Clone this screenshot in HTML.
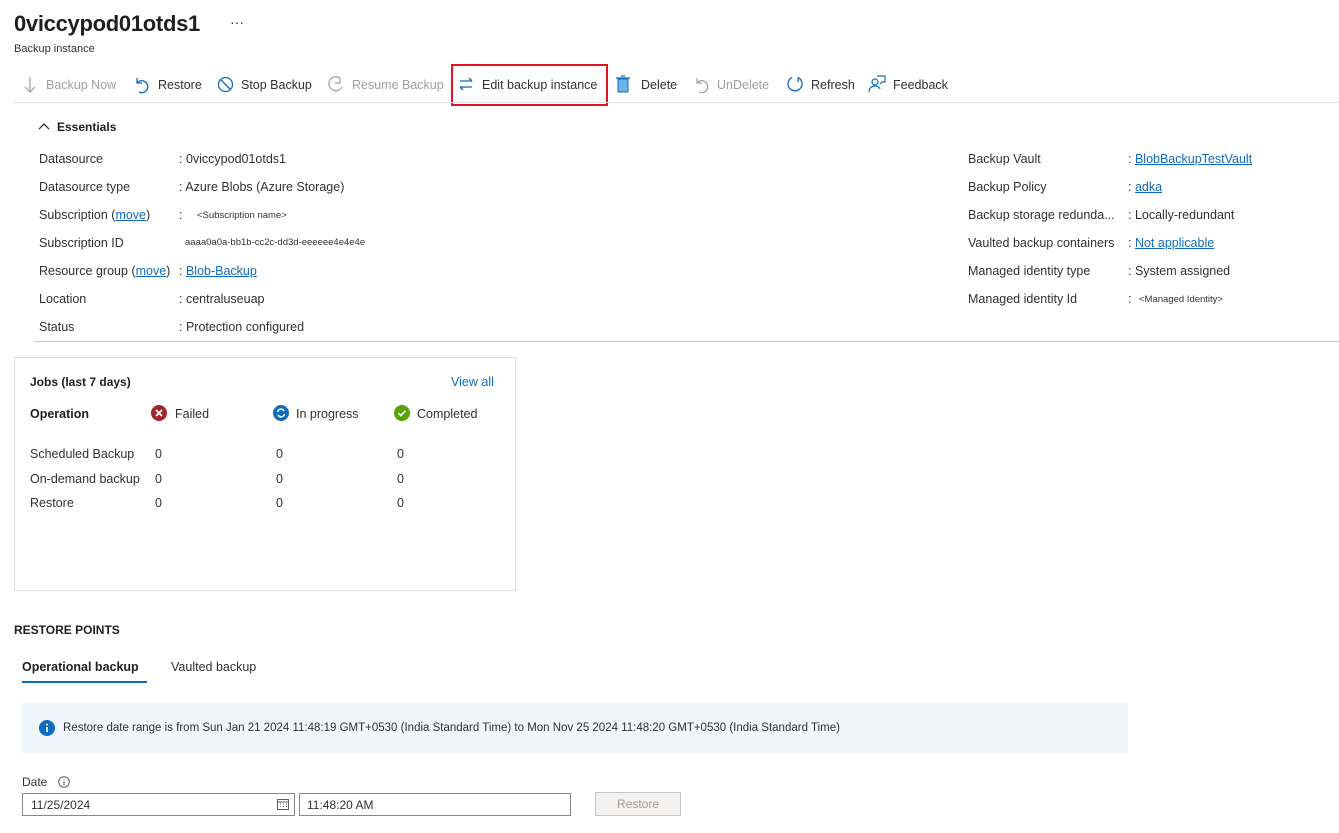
<!DOCTYPE html>
<html><head><style>
*{margin:0;padding:0;box-sizing:border-box}
body{width:1339px;height:833px;background:#fff;font-family:"Liberation Sans",sans-serif;font-size:12.5px;color:#323130;position:relative;overflow:hidden}
.a{position:absolute;white-space:nowrap}
.lnk{color:#0f6cbd;text-decoration:underline}
.g{color:#a19f9d}
.tb svg{position:absolute}
.s{font-size:9.5px}
</style></head><body>
<div class="a" style="left:14px;top:11px;font-size:22px;font-weight:600;color:#201f1e;letter-spacing:-0.3px">0viccypod01otds1</div>
<div class="a" style="left:230px;top:14px;font-size:14px">···</div>
<div class="a" style="left:14px;top:43px;font-size:11px">Backup instance</div>

<div class="tb">
<svg style="left:22px;top:76px" width="16" height="18" viewBox="0 0 16 18"><path d="M8 1v15M3 11l5 5 5-5" stroke="#a19f9d" fill="none" stroke-width="1.2"/></svg>
<div class="a g" style="left:46px;top:78px">Backup Now</div>
<svg style="left:134px;top:76px" width="16" height="18" viewBox="0 0 16 18"><path d="M3 2v5h5M3 7a6 6 0 1 1 2 9" stroke="#0f6cbd" fill="none" stroke-width="1.3"/></svg>
<div class="a" style="left:158px;top:78px">Restore</div>
<svg style="left:217px;top:76px" width="17" height="17" viewBox="0 0 17 17"><circle cx="8.5" cy="8.5" r="7" stroke="#0f6cbd" fill="none" stroke-width="1.3"/><path d="M4 4l9 9" stroke="#0f6cbd" stroke-width="1.3"/></svg>
<div class="a" style="left:241px;top:78px">Stop Backup</div>
<svg style="left:328px;top:76px" width="16" height="18" viewBox="0 0 16 18"><path d="M12 2a7 7 0 1 0 2 9M12 2v5H7" stroke="#a19f9d" fill="none" stroke-width="1.2"/></svg>
<div class="a g" style="left:352px;top:78px">Resume Backup</div>
<div class="a" style="left:451px;top:64px;width:157px;height:42px;border:2px solid #e81123"></div>
<svg style="left:458px;top:76px" width="16" height="16" viewBox="0 0 16 16"><path d="M2 5h12M11 2l3 3M14 11H2M5 14l-3-3" stroke="#0f6cbd" fill="none" stroke-width="1.3"/></svg>
<div class="a" style="left:482px;top:78px">Edit backup instance</div>
<svg style="left:616px;top:75px" width="14" height="18" viewBox="0 0 14 18"><rect x="2" y="4" width="10" height="13" fill="#6cb4e8" stroke="#0f6cbd"/><path d="M0 3h14M5 1h4" stroke="#0f6cbd" stroke-width="1.3"/></svg>
<div class="a" style="left:641px;top:78px">Delete</div>
<svg style="left:694px;top:76px" width="16" height="18" viewBox="0 0 16 18"><path d="M3 2v5h5M3 7a6 6 0 1 1 2 9" stroke="#a19f9d" fill="none" stroke-width="1.2"/></svg>
<div class="a g" style="left:717px;top:78px">UnDelete</div>
<svg style="left:786px;top:75px" width="18" height="18" viewBox="0 0 18 18"><path d="M6 2.5A7 7 0 1 0 12 2.5M12 2.5V7" stroke="#0f6cbd" fill="none" stroke-width="1.3"/></svg>
<div class="a" style="left:811px;top:78px">Refresh</div>
<svg style="left:868px;top:75px" width="18" height="18" viewBox="0 0 18 18"><circle cx="7" cy="7" r="3" stroke="#0f6cbd" fill="none" stroke-width="1.2"/><path d="M1 17c0-4 3-6 6-6s4 1 5 3M9 1h8v6h-3l-2 2" stroke="#0f6cbd" fill="none" stroke-width="1.2"/></svg>
<div class="a" style="left:893px;top:78px">Feedback</div>
</div>
<div class="a" style="left:14px;top:102px;width:1325px;height:1px;background:#e1dfdd"></div>

<svg class="a" style="left:38px;top:122px" width="12" height="10" viewBox="0 0 12 10"><path d="M1 7l5-5 5 5" stroke="#323130" fill="none" stroke-width="1.3"/></svg>
<div class="a" style="left:57px;top:120px;font-size:12px;font-weight:600;color:#201f1e">Essentials</div>

<div class="a" style="left:39px;top:152px">Datasource</div>
<div class="a" style="left:39px;top:180px">Datasource type</div>
<div class="a" style="left:39px;top:208px">Subscription (<span class="lnk">move</span>)</div>
<div class="a" style="left:39px;top:236px">Subscription ID</div>
<div class="a" style="left:39px;top:264px">Resource group (<span class="lnk">move</span>)</div>
<div class="a" style="left:39px;top:292px">Location</div>
<div class="a" style="left:39px;top:320px">Status</div>

<div class="a" style="left:179px;top:152px">: 0viccypod01otds1</div>
<div class="a" style="left:179px;top:180px">: Azure Blobs (Azure Storage)</div>
<div class="a" style="left:179px;top:208px">:</div>
<div class="a s" style="left:197px;top:210px">&lt;Subscription name&gt;</div>
<div class="a s" style="left:185px;top:237px">aaaa0a0a-bb1b-cc2c-dd3d-eeeeee4e4e4e</div>
<div class="a" style="left:179px;top:264px">: <span class="lnk">Blob-Backup</span></div>
<div class="a" style="left:179px;top:292px">: centraluseuap</div>
<div class="a" style="left:179px;top:320px">: Protection configured</div>

<div class="a" style="left:968px;top:152px">Backup Vault</div>
<div class="a" style="left:968px;top:180px">Backup Policy</div>
<div class="a" style="left:968px;top:208px">Backup storage redunda...</div>
<div class="a" style="left:968px;top:236px">Vaulted backup containers</div>
<div class="a" style="left:968px;top:264px">Managed identity type</div>
<div class="a" style="left:968px;top:292px">Managed identity Id</div>

<div class="a" style="left:1128px;top:152px">: <span class="lnk">BlobBackupTestVault</span></div>
<div class="a" style="left:1128px;top:180px">: <span class="lnk">adka</span></div>
<div class="a" style="left:1128px;top:208px">: Locally-redundant</div>
<div class="a" style="left:1128px;top:236px">: <span class="lnk">Not applicable</span></div>
<div class="a" style="left:1128px;top:264px">: System assigned</div>
<div class="a" style="left:1128px;top:292px">:</div>
<div class="a s" style="left:1139px;top:294px">&lt;Managed Identity&gt;</div>
<div class="a" style="left:34px;top:341px;width:1305px;height:1px;background:#c8c6c4"></div>

<div class="a" style="left:14px;top:357px;width:502px;height:234px;border:1px solid #e1dfdd"></div>
<div class="a" style="left:30px;top:375px;font-size:12px;font-weight:600;color:#201f1e">Jobs (last 7 days)</div>
<div class="a" style="left:451px;top:375px;color:#0f6cbd">View all</div>
<div class="a" style="left:30px;top:407px;font-weight:600;color:#201f1e">Operation</div>
<svg class="a" style="left:151px;top:405px" width="16" height="16"><circle cx="8" cy="8" r="8" fill="#a4262c"/><path d="M5 5l6 6M11 5l-6 6" stroke="#fff" stroke-width="1.8"/></svg>
<div class="a" style="left:175px;top:407px">Failed</div>
<svg class="a" style="left:273px;top:405px" width="16" height="16"><circle cx="8" cy="8" r="8" fill="#0f6cbd"/><path d="M4.5 7a3.5 3.5 0 0 1 6.5-1M11.5 9a3.5 3.5 0 0 1-6.5 1" stroke="#fff" fill="none" stroke-width="1.5"/></svg>
<div class="a" style="left:296px;top:407px">In progress</div>
<svg class="a" style="left:394px;top:405px" width="16" height="16"><circle cx="8" cy="8" r="8" fill="#57a300"/><path d="M4.5 8.2l2.3 2.3 4.7-4.7" stroke="#fff" fill="none" stroke-width="1.8"/></svg>
<div class="a" style="left:417px;top:407px">Completed</div>
<div class="a" style="left:30px;top:442px;line-height:24.5px">Scheduled Backup<br>On-demand backup<br>Restore</div>
<div class="a" style="left:155px;top:442px;line-height:24.5px">0<br>0<br>0</div>
<div class="a" style="left:276px;top:442px;line-height:24.5px">0<br>0<br>0</div>
<div class="a" style="left:397px;top:442px;line-height:24.5px">0<br>0<br>0</div>

<div class="a" style="left:14px;top:623px;font-size:12px;font-weight:600;color:#201f1e">RESTORE POINTS</div>
<div class="a" style="left:22px;top:660px;font-weight:600;color:#201f1e">Operational backup</div>
<div class="a" style="left:22px;top:681px;width:125px;height:2px;background:#0f6cbd"></div>
<div class="a" style="left:171px;top:660px">Vaulted backup</div>

<div class="a" style="left:22px;top:703px;width:1106px;height:50px;background:#eff6fc"></div>
<svg class="a" style="left:39px;top:720px" width="16" height="16"><circle cx="8" cy="8" r="8" fill="#0f6cbd"/><rect x="7.2" y="7" width="1.6" height="5" fill="#fff"/><circle cx="8" cy="4.6" r="1" fill="#fff"/></svg>
<div class="a" style="left:63px;top:722px;font-size:11.5px">Restore date range is from Sun Jan 21 2024 11:48:19 GMT+0530 (India Standard Time) to Mon Nov 25 2024 11:48:20 GMT+0530 (India Standard Time)</div>

<div class="a" style="left:22px;top:775px;font-size:12px">Date</div>
<svg class="a" style="left:58px;top:776px" width="12" height="12"><circle cx="6" cy="6" r="5.3" stroke="#605e5c" fill="none"/><path d="M6 5v4M6 3v1" stroke="#605e5c"/></svg>
<div class="a" style="left:22px;top:793px;width:273px;height:23px;border:1px solid #8a8886"></div>
<div class="a" style="left:31px;top:798px;font-size:12px">11/25/2024</div>
<svg class="a" style="left:277px;top:798px" width="12" height="12"><rect x="0.5" y="1.5" width="11" height="10" stroke="#605e5c" fill="none"/><path d="M0 4h12M3 6h1M6 6h1M9 6h1M3 8.5h1M6 8.5h1M9 8.5h1" stroke="#605e5c"/></svg>
<div class="a" style="left:299px;top:793px;width:272px;height:23px;border:1px solid #8a8886"></div>
<div class="a" style="left:307px;top:798px;font-size:12px">11:48:20 AM</div>
<div class="a" style="left:595px;top:792px;width:86px;height:24px;border:1px solid #c8c6c4;background:#f3f2f1;color:#a19f9d;font-size:12px;text-align:center;line-height:22px">Restore</div>
</body></html>
